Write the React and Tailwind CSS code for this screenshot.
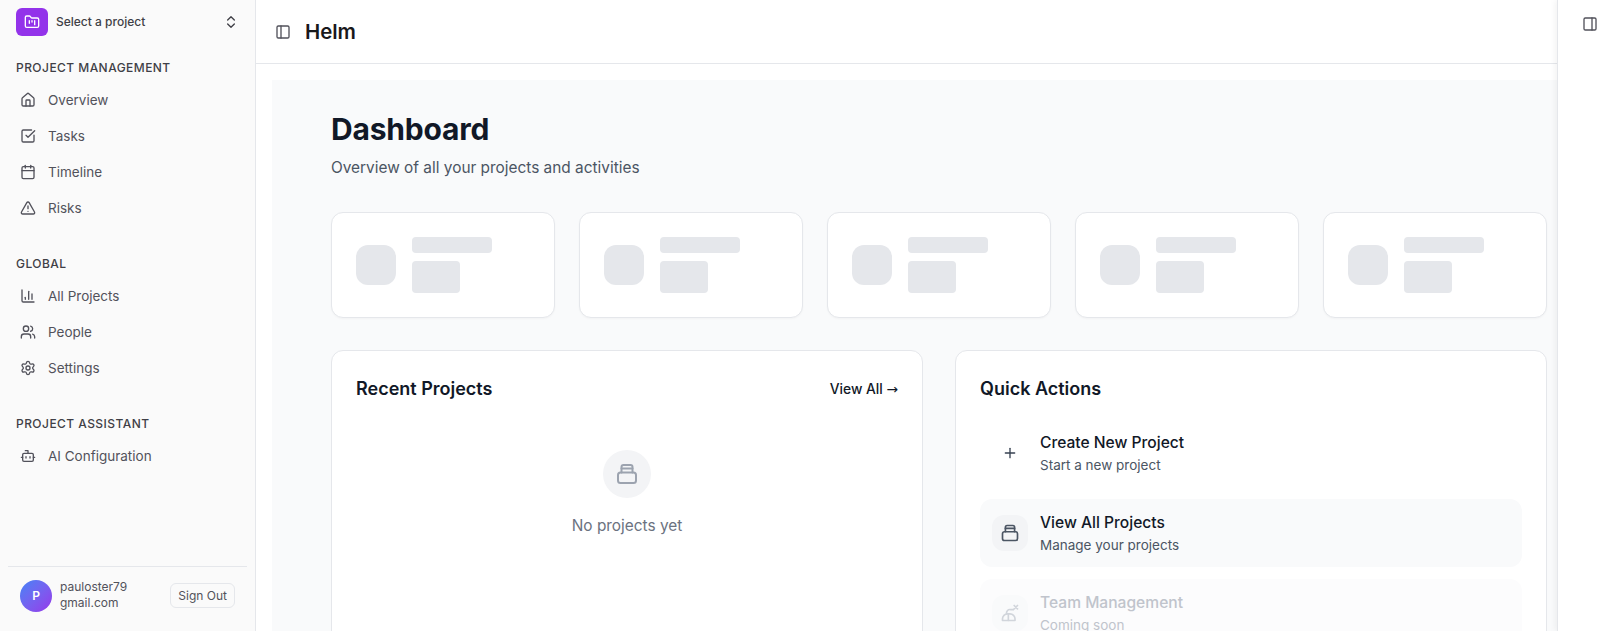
import React from 'react';
import {
  Bot,
  Calendar,
  ChartColumn,
  ChevronsUpDown,
  FolderKanban,
  House,
  PanelLeft,
  PanelRight,
  Plus,
  Settings,
  SquareCheckBig,
  TriangleAlert,
  Users,
} from 'lucide-react';

const navGroups = [
  {
    title: 'PROJECT MANAGEMENT',
    items: [
      { label: 'Overview', icon: House },
      { label: 'Tasks', icon: SquareCheckBig },
      { label: 'Timeline', icon: Calendar },
      { label: 'Risks', icon: TriangleAlert },
    ],
  },
  {
    title: 'GLOBAL',
    items: [
      { label: 'All Projects', icon: ChartColumn },
      { label: 'People', icon: Users },
      { label: 'Settings', icon: Settings },
    ],
  },
  {
    title: 'PROJECT ASSISTANT',
    items: [{ label: 'AI Configuration', icon: Bot }],
  },
];

// box glyph used for projects
const BoxIcon = ({ className }) => (
  <svg viewBox="0 0 24 24" fill="none" stroke="currentColor" strokeWidth="2" strokeLinecap="round" strokeLinejoin="round" className={className}>
    <rect x="3" y="10.5" width="18" height="10.5" rx="2.5" />
    <path d="M6.5 10.5 V5 a2 2 0 0 1 2-2 h7 a2 2 0 0 1 2 2 v5.5" />
    <path d="M6.5 6.5 h11" />
  </svg>
);

// team glyph, person with a small cross
const TeamIcon = ({ className }) => (
  <svg viewBox="0 0 24 24" fill="none" stroke="currentColor" strokeWidth="2" strokeLinecap="round" strokeLinejoin="round" className={className}>
    <path d="M3 21 v-2 a6 6 0 0 1 6-6 h3 a6 6 0 0 1 6 6 v2 z" />
    <path d="M10 13 v8" />
    <path d="M8 13 a4 4 0 0 1 5-5 h3" />
    <path d="M17 3 l4 4 M21 3 l-4 4" />
  </svg>
);

const Sidebar = () => (
  <aside className="w-[256px] shrink-0 h-full bg-[#fafafa] border-r border-[#e5e7eb] flex flex-col overflow-hidden">
    <div className="flex items-center h-[44px] pl-4 pr-4 shrink-0">
      <div className="w-8 h-7 rounded-md bg-[#9333ea] flex items-center justify-center text-white">
        <FolderKanban size={16} />
      </div>
      <span className="ml-2 text-xs font-medium text-[#3f3f46] flex-1">Select a project</span>
      <ChevronsUpDown size={16} className="text-[#3f3f46]" />
    </div>
    <div className="flex-1">
      {navGroups.map((group) => (
        <div key={group.title} className="mb-[30px] first:mt-4">
          <div className="px-4 h-[16px] flex items-center text-xs font-medium tracking-[0.45px] text-[#3f3f46]">{group.title}</div>
          <ul className="mt-[6px]">
            {group.items.map((item) => (
              <li key={item.label} className="h-[36px] pl-5 flex items-center gap-3 text-[13.5px] text-[#52525b]">
                <item.icon size={16} strokeWidth={2} className="text-[#52525b] shrink-0" />
                <span>{item.label}</span>
              </li>
            ))}
          </ul>
        </div>
      ))}
    </div>
    <div className="mx-2 mb-[7px] border-t border-[#e5e7eb] h-[58px] shrink-0 flex items-center pl-3 pr-3">
      <div className="w-8 h-8 rounded-full bg-gradient-to-br from-[#3b82f6] to-[#9333ea] flex items-center justify-center text-white text-xs font-semibold">P</div>
      <div className="ml-2 flex-1 text-xs leading-4 text-[#52525b] -mt-[2px]">
        <div>pauloster79</div>
        <div>gmail.com</div>
      </div>
      <button className="h-[25px] px-[7px] rounded-md border border-[#e5e7eb] text-xs text-[#52525b]">Sign Out</button>
    </div>
  </aside>
);

const StatSkeleton = () => (
  <div className="w-[224px] h-[106px] shrink-0 bg-white border border-[#e5e7eb] rounded-xl shadow-[0_1px_2px_rgba(0,0,0,0.03)] flex items-center px-6">
    <div className="w-10 h-10 rounded-xl bg-[#e5e7eb] shrink-0" />
    <div className="ml-4">
      <div className="w-20 h-4 rounded bg-[#e5e7eb]" />
      <div className="w-12 h-8 rounded bg-[#e5e7eb] mt-2" />
    </div>
  </div>
);

const ActionRow = ({ icon, title, subtitle, className, iconClass }) => (
  <div className={`flex items-center h-[68px] px-3 rounded-xl ${className}`}>
    <div className={`w-9 h-9 rounded-xl flex items-center justify-center shrink-0 ${iconClass}`}>{icon}</div>
    <div className="ml-3">
      <div className="text-[15.6px] font-medium leading-[22px]">{title}</div>
      <div className="text-[13.5px] leading-5 mt-[1px]">{subtitle}</div>
    </div>
  </div>
);

export default function App() {
  return (
    <div className="w-[1621px] h-[631px] flex overflow-hidden bg-white text-[#111827] font-['Inter',sans-serif]">
      <Sidebar />
      <main className="flex-1 min-w-0 flex flex-col h-full">
        <header className="h-[64px] shrink-0 border-b border-[#e5e7eb] flex items-center pl-[19px] gap-[14px]">
          <PanelLeft size={16} className="text-[#52525b]" />
          <h1 className="text-[20.4px] font-semibold text-[#18181b] mt-[1px]">Helm</h1>
        </header>
        <div className="flex-1 min-h-0 overflow-hidden pl-4 pt-4">
          <div className="bg-[#f9fafb] h-full pl-[59px] pt-[31px] overflow-hidden">
            <h2 className="text-3xl font-bold tracking-[-0.2px] text-[#111827] leading-9">Dashboard</h2>
            <p className="mt-[9px] text-[15.4px] leading-6 text-[#4b5563]">Overview of all your projects and activities</p>
            <div className="flex gap-6 mt-8">
              <StatSkeleton />
              <StatSkeleton />
              <StatSkeleton />
              <StatSkeleton />
              <StatSkeleton />
            </div>
            <div className="grid grid-cols-2 gap-8 w-[1216px] mt-8">
              <section className="bg-white border border-[#e5e7eb] rounded-xl h-[400px] p-6">
                <div className="flex items-center justify-between h-7">
                  <h3 className="text-lg font-semibold">Recent Projects</h3>
                  <span className="text-[13.8px] font-medium">
                    View All <span className="font-['DejaVu_Sans',sans-serif] font-normal">→</span>
                  </span>
                </div>
                <div className="flex flex-col items-center mt-[47px]">
                  <div className="w-12 h-12 rounded-full bg-[#f3f4f6] flex items-center justify-center">
                    <BoxIcon className="w-6 h-6 text-[#9ca3af]" />
                  </div>
                  <p className="mt-4 text-[15.4px] leading-6 text-[#6b7280]">No projects yet</p>
                </div>
              </section>
              <section className="bg-white border border-[#e5e7eb] rounded-xl h-[400px] p-6">
                <h3 className="text-lg font-semibold h-7 leading-7">Quick Actions</h3>
                <div className="mt-[16px] flex flex-col gap-3">
                  <ActionRow
                    icon={<Plus size={16} className="text-[#374151]" />}
                    title="Create New Project"
                    subtitle={<span className="text-[#4b5563]">Start a new project</span>}
                  />
                  <ActionRow
                    className="bg-[#f9fafb]"
                    iconClass="bg-[#f3f4f6]"
                    icon={<BoxIcon className="w-5 h-5 text-[#4b5563]" />}
                    title="View All Projects"
                    subtitle={<span className="text-[#4b5563]">Manage your projects</span>}
                  />
                  <ActionRow
                    className="bg-[#fcfcfd] text-[#c0c4cc]"
                    iconClass="bg-[#f9fafb]"
                    icon={<TeamIcon className="w-5 h-5 text-[#d1d5db]" />}
                    title="Team Management"
                    subtitle="Coming soon"
                  />
                </div>
              </section>
            </div>
          </div>
        </div>
      </main>
      <aside className="w-[64px] shrink-0 h-full bg-white border-l border-[#e5e7eb] shadow-[-2px_0_6px_rgba(0,0,0,0.05)] z-10 flex justify-center pt-4">
        <PanelRight size={16} className="text-[#52525b]" />
      </aside>
    </div>
  );
}
